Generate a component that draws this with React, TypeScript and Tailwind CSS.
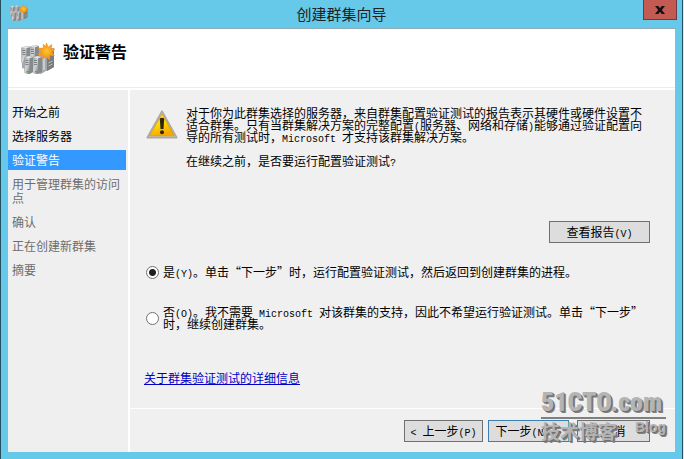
import { useState, type ReactNode } from "react";
import { clsx } from "clsx";

const STEPS = [
  { label: "开始之前", state: "done" },
  { label: "选择服务器", state: "done" },
  { label: "验证警告", state: "current" },
  { label: "用于管理群集的访问点", state: "todo" },
  { label: "确认", state: "todo" },
  { label: "正在创建新群集", state: "todo" },
  { label: "摘要", state: "todo" },
];

// half-width latin inside the 12px CJK text
function Latin({ children }: { children: ReactNode }) {
  return (
    <span className="whitespace-pre font-['Liberation_Mono',monospace] text-[10px] leading-[0]">{children}</span>
  );
}

function Server({ x, y }: { x: number; y: number }) {
  return (
    <g transform={`translate(${x} ${y})`}>
      <path d="M0 1.5 5 0 9 1v15l-4 2-5-1z" fill="#85898c" />
      <path d="M0 1.5 5 2v16l-5-1z" fill="url(#serverFace)" />
      <path d="M0 1.5 4 0 9 1 5 2.2z" fill="#e3e5e6" />
      <path d="M1 4.5h3M1 6.5h3M1 8.5h3" stroke="#6a6f73" strokeWidth="0.8" />
      <path d="M2 15.8h2.4" stroke="#43b02a" strokeWidth="1.3" />
    </g>
  );
}

function ClusterIcon({ className }: { className: string }) {
  return (
    <svg viewBox="0 0 34 32" className={className} aria-hidden="true">
      <defs>
        <linearGradient id="serverFace" x1="0" y1="0" x2="1" y2="1">
          <stop offset="0" stopColor="#9fa3a6" />
          <stop offset="0.5" stopColor="#d2d4d5" />
          <stop offset="1" stopColor="#7b7f82" />
        </linearGradient>
        <radialGradient id="burst">
          <stop offset="0" stopColor="#ffc62e" />
          <stop offset="1" stopColor="#f08a12" />
        </radialGradient>
      </defs>
      <path d="M1 5h32v18L20 31 1 25z" fill="#a6aaac" />
      <Server x={0.5} y={3} />
      <Server x={9} y={2} />
      <path d="M18 8 25 6l8 2v16l-7 4-8-4z" fill="#a3a7aa" />
      <path d="M26 10v18l7-4V8z" fill="#777c7f" />
      <path d="m27.5 20 4-2M27.5 23l4-2" stroke="#cfd2d4" strokeWidth="0.8" />
      <Server x={3.5} y={13} />
      <Server x={12} y={13} />
      <path d="M23 13v14" stroke="#d5d7d8" strokeWidth="1.6" />
      <path
        d="m25.5 0 1.5 4.3 3.9-2.7-1.1 4.2 4.2.4-3.4 2.7 2.8 3.9-4.5-.7-.6 4.3-2.9-3.2-3.7 3 .5-4.5-5.2-.1 3.9-2.9-3.5-3.6 4.8.3.2-4.1 2.1 2.5z"
        fill="url(#burst)"
        stroke="#f59a1c"
        strokeWidth="0.8"
      />
    </svg>
  );
}

function WarningIcon() {
  return (
    <svg viewBox="0 0 32 29" className="mt-[3px] h-[29px] w-8 shrink-0" aria-hidden="true">
      <defs>
        <linearGradient id="warn" x1="0" y1="0" x2="0.4" y2="1">
          <stop offset="0" stopColor="#fff04a" />
          <stop offset="0.5" stopColor="#ffdc00" />
          <stop offset="1" stopColor="#f5a800" />
        </linearGradient>
      </defs>
      <path d="M16 1.2 30.8 27.6H1.2z" fill="#c8c8c8" stroke="#a9a9a6" strokeWidth="1.6" strokeLinejoin="round" />
      <path d="M16 4 28.4 25.8H3.6z" fill="url(#warn)" stroke="#d99a12" strokeWidth="0.8" strokeLinejoin="round" />
      <path d="M13.8 8.5q2.2-1.4 4.4 0l-.7 10.5h-3z" fill="#2b2605" />
      <circle cx="16" cy="22.2" r="2" fill="#2b2605" />
    </svg>
  );
}

function WizardButton({ className, children }: { className?: string; children: ReactNode }) {
  return (
    <button
      type="button"
      className={clsx("h-[22px] whitespace-nowrap border bg-[#dddddd] text-center text-xs leading-3", className)}
    >
      {children}
    </button>
  );
}

function Choice({
  checked,
  onChange,
  children,
}: {
  checked: boolean;
  onChange: () => void;
  children: ReactNode;
}) {
  return (
    <label className="flex items-center gap-1 pl-0.5">
      <input
        type="radio"
        name="run-tests"
        checked={checked}
        onChange={onChange}
        className="my-[-1px] size-[13px] shrink-0 appearance-none rounded-full border border-[#707070] bg-white checked:bg-[radial-gradient(circle,#1f1f1f_3px,#ffffff_4px)]"
      />
      <span className="max-w-[484px]">{children}</span>
    </label>
  );
}

export default function App() {
  const [runTests, setRunTests] = useState(true);

  return (
    <div className="flex min-h-screen bg-[#dfe7ec] pr-px font-['Noto_Sans_CJK_SC',sans-serif] text-xs leading-3 text-black">
      <div className="relative flex flex-1 flex-col border-x border-[#23505f] bg-[#66c9e9] px-[7px] pb-[7px]">
        <header className="relative flex h-7 items-center justify-center">
          <ClusterIcon className="absolute left-0.5 top-1 size-[18px]" />
          <h1 className="text-[15px] leading-5 text-[#222222]">创建群集向导</h1>
          <button
            type="button"
            aria-label="关闭"
            className="absolute -right-0.5 top-0 flex h-5 w-[34px] items-center justify-center border border-t-0 border-[#6b3b45] bg-[#c35b52]"
          >
            <svg viewBox="0 0 10 8" className="h-2 w-2.5" aria-hidden="true">
              <path d="M0 0h3.3L5 2.3 6.7 0H10L6.8 4 10 8H6.7L5 5.7 3.3 8H0l3.2-4z" fill="#141014" />
            </svg>
          </button>
        </header>

        <div className="flex flex-1 flex-col border-t border-[#8fa9b5] bg-white">
          <div className="flex h-[59px] items-start gap-2 border-b border-[#ececec] pl-[13px] pt-3">
            <ClusterIcon className="mt-0.5 h-8 w-[34px]" />
            <h2 className="text-base font-bold leading-5">验证警告</h2>
          </div>

          <div className="mt-0.5 flex flex-1 gap-0.5">
            <nav className="w-[120px] shrink-0 bg-[#efefef] pr-0.5 pt-3">
              <ol className="flex flex-col gap-1">
                {STEPS.map((s) => (
                  <li
                    key={s.label}
                    className={clsx(
                      "px-1 py-[3px] leading-[14px]",
                      s.state === "current" && "bg-[#3399ff] text-white",
                      s.state === "todo" && "text-[#6d6d6d]",
                    )}
                  >
                    {s.label}
                  </li>
                ))}
              </ol>
            </nav>

            <main className="flex flex-1 flex-col">
              <div className="flex flex-1 flex-col bg-[#f0f0f0] pl-3.5 pr-[25px] pt-[17px]">
                <div className="flex gap-2 pl-0.5">
                  <WarningIcon />
                  <div className="flex max-w-[460px] flex-col gap-3">
                    <p>
                      对于你为此群集选择的服务器，来自群集配置验证测试的报告表示其硬件或硬件设置不适合群集。只有当群集解决方案的完整配置
                      <Latin>(</Latin>服务器、网络和存储<Latin>)</Latin>
                      能够通过验证配置向导的所有测试时，<Latin>Microsoft </Latin>才支持该群集解决方案。
                    </p>
                    <p>
                      在继续之前，是否要运行配置验证测试<Latin>?</Latin>
                    </p>
                  </div>
                </div>

                <div className="mt-[54px] flex justify-end">
                  <WizardButton className="w-[101px] border-[#707070]">
                    查看报告<Latin>(V)</Latin>
                  </WizardButton>
                </div>

                <div className="mt-[23px] flex flex-col gap-7">
                  <Choice checked={runTests} onChange={() => setRunTests(true)}>
                    是<Latin>(Y)</Latin>。单击“下一步”时，运行配置验证测试，然后返回到创建群集的进程。
                  </Choice>
                  <Choice checked={!runTests} onChange={() => setRunTests(false)}>
                    否<Latin>(O)</Latin>。我不需要<Latin> Microsoft </Latin>
                    对该群集的支持，因此不希望运行验证测试。单击“下一步”
                    <br />
                    时，继续创建群集。
                  </Choice>
                </div>

                <a href="#validation" className="mt-[42px] self-start text-[#0000c8] underline underline-offset-1">
                  关于群集验证测试的详细信息
                </a>
              </div>

              <footer className="mt-px flex justify-end gap-2 bg-[#f0f0f0] pb-2.5 pr-[25px] pt-[11px]">
                <div className="flex gap-[5px]">
                  <WizardButton className="w-[79px] border-[#707070]">
                    <Latin>&lt; </Latin>上一步<Latin>(P)</Latin>
                  </WizardButton>
                  <WizardButton className="w-[81px] border-[#3c7fb1]">
                    下一步<Latin>(N) &gt;</Latin>
                  </WizardButton>
                </div>
                <WizardButton className="w-[73px] border-[#707070]">取消</WizardButton>
              </footer>
            </main>
          </div>
        </div>

        <div className="pointer-events-none absolute bottom-4 right-4 w-[125px] whitespace-nowrap text-[#b4b4b4] [text-shadow:1px_1px_0_#707070,2px_2px_0_#808080]">
          <div className="border-b-2 border-[#808080] font-['Roboto_Condensed','Roboto',sans-serif] text-[26px] font-black leading-[30px]">
            51CTO.com
          </div>
          <div className="flex justify-between leading-6">
            <span className="text-[19px] font-bold">技术博客</span>
            <span className="font-['Liberation_Sans',sans-serif] text-sm font-bold leading-4">Blog</span>
          </div>
        </div>
      </div>
    </div>
  );
}
